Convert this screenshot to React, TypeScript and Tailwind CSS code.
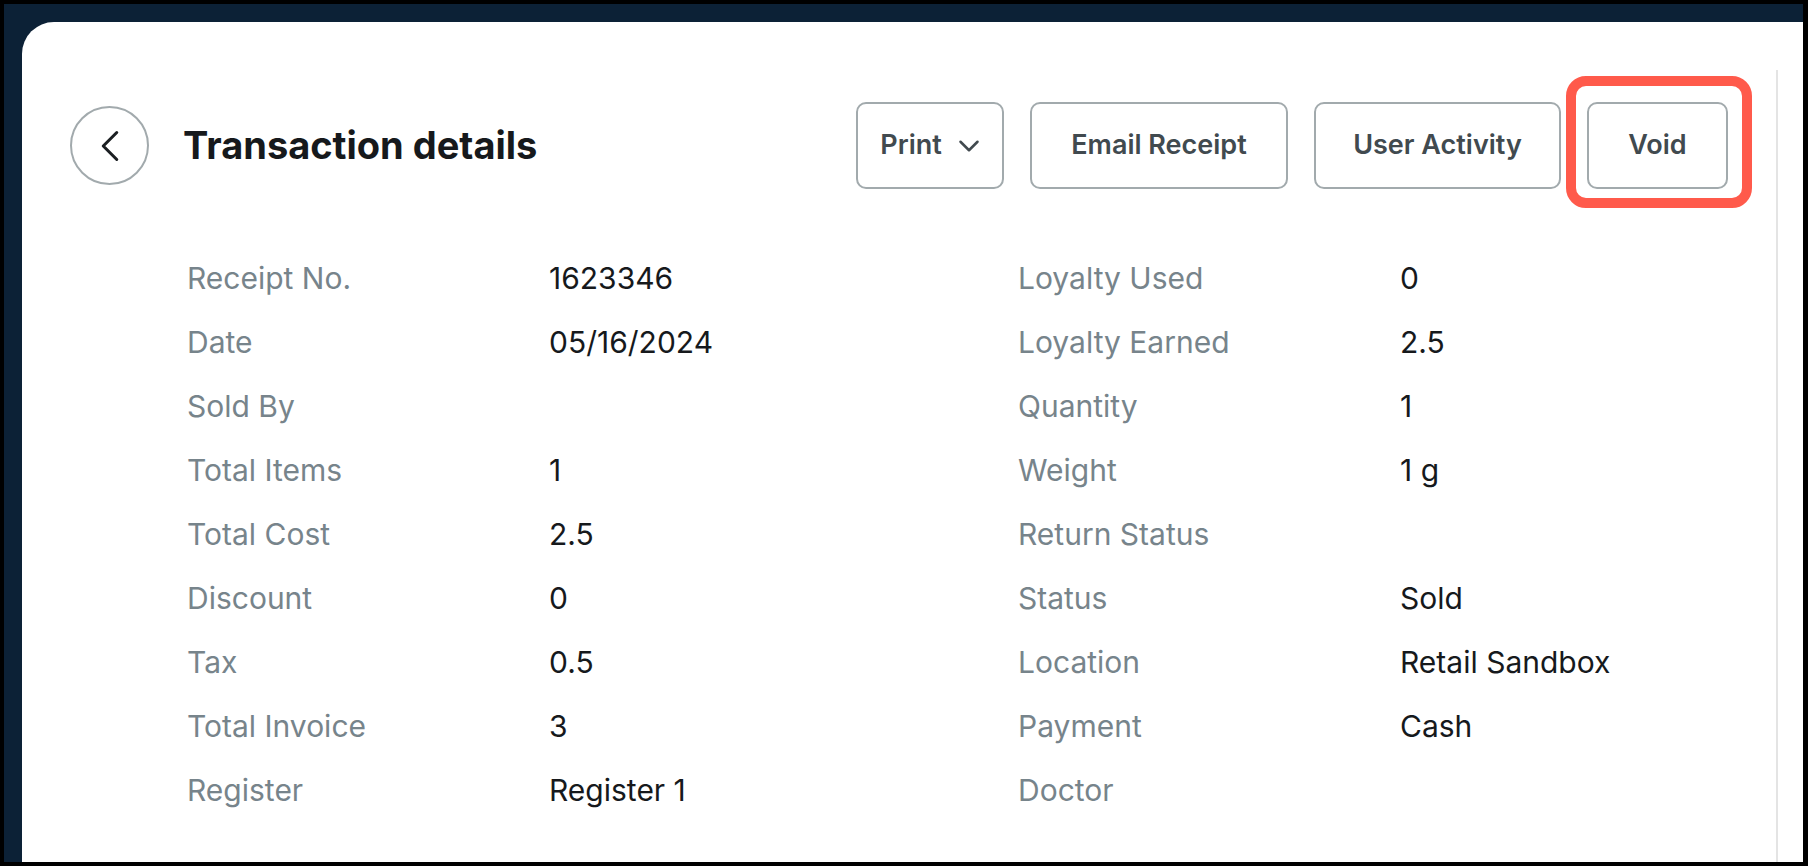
import { ChevronLeft, ChevronDown } from 'lucide-react';

const leftRows: [string, string][] = [
  ['Receipt No.', '1623346'],
  ['Date', '05/16/2024'],
  ['Sold By', ''],
  ['Total Items', '1'],
  ['Total Cost', '2.5'],
  ['Discount', '0'],
  ['Tax', '0.5'],
  ['Total Invoice', '3'],
  ['Register', 'Register 1'],
];

const rightRows: [string, string][] = [
  ['Loyalty Used', '0'],
  ['Loyalty Earned', '2.5'],
  ['Quantity', '1'],
  ['Weight', '1 g'],
  ['Return Status', ''],
  ['Status', 'Sold'],
  ['Location', 'Retail Sandbox'],
  ['Payment', 'Cash'],
  ['Doctor', ''],
];

function ActionButton({ label, width, children }: { label: string; width: string; children?: React.ReactNode }) {
  return (
    <button
      className={`${width} h-[87px] flex items-center justify-center gap-[10px] rounded-[10px] border-2 border-[#a2aaad] bg-white text-[27px] font-semibold text-[#414a4f]`}
    >
      {label}
      {children}
    </button>
  );
}

export default function App() {
  return (
    <div className="w-[1808px] h-[866px] bg-black pt-[4px] pl-[4px] pr-[5px] pb-[4px] font-['Inter',sans-serif]">
      <div className="h-full bg-[#0c2136] pt-[18px] pl-[18px]">
        <div className="h-full bg-white rounded-tl-[32px] flex">
          {/* main content */}
          <div className="flex-1 pt-[80px] pl-[48px] pr-[48px]">
            <div className="flex items-center h-[87px]">
              <button className="w-[79px] h-[79px] rounded-full border-2 border-[#a2aaad] flex items-center justify-center text-[#1b1f22]">
                <ChevronLeft size={54} strokeWidth={1.35} />
              </button>
              <h1 className="ml-[34px] text-[38px] font-bold text-[#16191c]">Transaction details</h1>

              <div className="ml-auto flex items-center gap-[26px]">
                <ActionButton label="Print" width="w-[148px] pl-[6px]">
                  <ChevronDown size={34} strokeWidth={1.8} />
                </ActionButton>
                <ActionButton label="Email Receipt" width="w-[258px]" />
                <ActionButton label="User Activity" width="w-[247px]" />
                <div className="relative">
                  <ActionButton label="Void" width="w-[141px]" />
                  {/* highlight annotation */}
                  <div className="absolute -left-[21px] -top-[26px] -right-[24px] -bottom-[19px] rounded-[20px] border-[10px] border-[#ff5a4b] pointer-events-none" />
                </div>
              </div>
            </div>

            <div className="mt-[57px] ml-[117px] grid grid-cols-[362px_469px_382px_1fr] text-[30px]">
              {leftRows.map(([l, v], i) => (
                <div key={l} className="contents">
                  <div className="h-[64px] flex items-center text-[#77848b]">{l}</div>
                  <div className="h-[64px] flex items-center text-[#16191c]">{v}</div>
                  <div className="h-[64px] flex items-center text-[#77848b]">{rightRows[i][0]}</div>
                  <div className="h-[64px] flex items-center text-[#16191c]">{rightRows[i][1]}</div>
                </div>
              ))}
            </div>
          </div>

          {/* scroll track edge */}
          <div className="w-[27px] mt-[48px] border-l-2 border-[#e4e4e4]" />
        </div>
      </div>
    </div>
  );
}
